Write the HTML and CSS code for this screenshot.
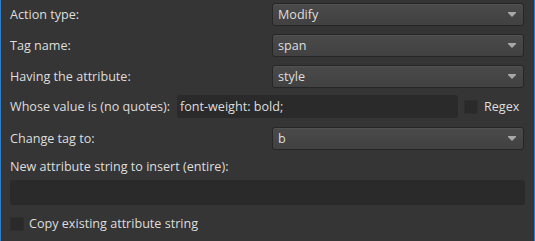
FILE: index.html
```html
<!DOCTYPE html>
<html lang="en">
<head>
  <meta charset="UTF-8" />
  <title>Tag rule</title>
  <link rel="stylesheet" href="styles.css">
</head>
<body>

  <div class="panel">
    <div class="row">
      <label class="label">Action type:</label>
      <div class="combo"><span>Modify</span><svg class="arrow" width="8" height="5" viewBox="0 0 8 5"><path d="M0 0H8V1L4 5L0 1Z" /></svg></div>
    </div>
    <div class="row">
      <label class="label">Tag name:</label>
      <div class="combo"><span>span</span><svg class="arrow" width="8" height="5" viewBox="0 0 8 5"><path d="M0 0H8V1L4 5L0 1Z" /></svg></div>
    </div>
    <div class="row">
      <label class="label">Having the attribute:</label>
      <div class="combo"><span>style</span><svg class="arrow" width="8" height="5" viewBox="0 0 8 5"><path d="M0 0H8V1L4 5L0 1Z" /></svg></div>
    </div>
    <div class="row row-value">
      <label class="label short">Whose value is (no quotes):</label>
      <div class="field value">font-weight: bold;</div>
      <div class="check regex"><span class="box"></span>Regex</div>
    </div>
    <div class="row row-change">
      <label class="label">Change tag to:</label>
      <div class="combo"><span>b</span><svg class="arrow" width="8" height="5" viewBox="0 0 8 5"><path d="M0 0H8V1L4 5L0 1Z" /></svg></div>
    </div>
    <div class="caption">New attribute string to insert (entire):</div>
    <div class="field wide"></div>
    <div class="check copy"><span class="box"></span>Copy existing attribute string</div>
  </div>

</body>
</html>
```

FILE: styles.css
```css
body {
        margin: 0;
        padding: 0;
        background-color: #353535;
        font-family: "Open Sans", "Noto Sans", sans-serif;
        font-size: 12.6px;
        color: #dedede;
    }
    .panel {
        height: 241px;
        box-sizing: border-box;
        border-left: 1px solid #2b7fd0;
        border-right: 1px solid #2b7fd0;
        padding: 3px 9px 0 9px;
    }
    .row {
        display: flex;
        align-items: center;
        height: 23px;
        margin-bottom: 8px;
    }
    .label {
        width: 262px;
        flex: none;
    }
    .label.short {
        width: 167px;
    }
    .combo {
        flex: 1;
        height: 23px;
        box-sizing: border-box;
        display: flex;
        align-items: center;
        justify-content: space-between;
        padding: 0 7px 0 5px;
        margin-right: 1px;
        border: 1px solid #262626;
        border-radius: 3px;
        background: linear-gradient(#4a4a4a, #414141);
        box-shadow: inset 0 1px 0 #525252;
    }
    .arrow {
        fill: #a8a8a8;
    }
    .row-value {
        margin-top: -1px;
        margin-bottom: 9px;
    }
    .field {
        background: #2a2a2a;
        border-radius: 3px;
        box-sizing: border-box;
    }
    .value {
        width: 281px;
        height: 23px;
        line-height: 23px;
        padding-left: 3px;
    }
    .check {
        display: flex;
        align-items: center;
    }
    .box {
        width: 14px;
        height: 14px;
        box-sizing: border-box;
        background: #2a2a2a;
        border: 1px solid #2e2e2e;
        margin-right: 6px;
    }
    .regex {
        margin-left: 6px;
    }
    .caption {
        margin-top: 8px;
        height: 18px;
        line-height: 18px;
    }
    .wide {
        height: 25px;
        margin-top: 4px;
    }
    .copy {
        margin-top: 10px;
    }
    .copy .box {
        margin-right: 5px;
    }
```
